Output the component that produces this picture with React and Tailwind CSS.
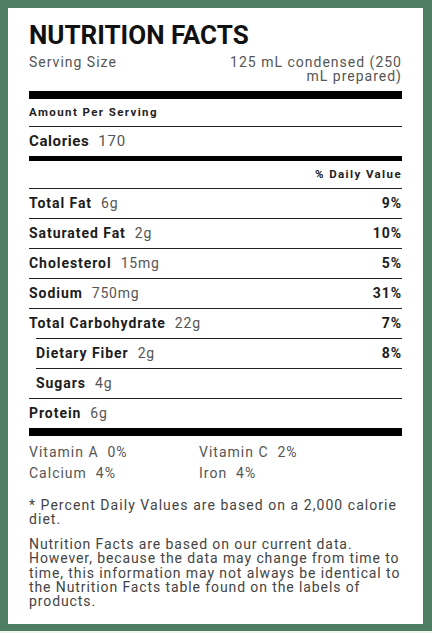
import React from 'react';

const nutrients = [
  { label: 'Total Fat', value: '6g', dv: '9%' },
  { label: 'Saturated Fat', value: '2g', dv: '10%' },
  { label: 'Cholesterol', value: '15mg', dv: '5%' },
  { label: 'Sodium', value: '750mg', dv: '31%' },
  { label: 'Total Carbohydrate', value: '22g', dv: '7%' },
  { label: 'Dietary Fiber', value: '2g', dv: '8%', sub: true },
  { label: 'Sugars', value: '4g', dv: '', sub: true },
  { label: 'Protein', value: '6g', dv: '' },
];

function Row({ label, value, dv, sub }) {
  return (
    <div className={`flex items-center justify-between h-[30px] border-t border-[#222] ${sub ? 'ml-[7px]' : ''}`}>
      <div className="flex items-baseline gap-[9px]">
        <span className="font-bold text-[14px] tracking-[0.95px] text-[#1c1c1c]">{label}</span>
        <span className="text-[14px] tracking-[0.8px] text-[#555]">{value}</span>
      </div>
      <span className="font-bold text-[14px] tracking-[0.95px] text-[#1c1c1c]">{dv}</span>
    </div>
  );
}

export default function App() {
  return (
    <div className="w-[432px] h-[633px] bg-[#eef5f0]" style={{ fontFamily: 'Roboto, "Liberation Sans", sans-serif' }}>
      <div className="h-[631px] bg-[#4e7d63] pt-[8px] pl-[8px] pr-[9px] pb-[7px]">
        <div className="h-full bg-white px-[21px] pt-[12px]">
          <h1 className="font-bold text-[26px] leading-[30px] text-[#111]">NUTRITION FACTS</h1>

          <div className="flex justify-between mt-[5px] text-[14px] leading-[14px] text-[#555] tracking-[1px]">
            <span>Serving Size</span>
            <span className="text-right w-[178px]">125 mL condensed (250 mL prepared)</span>
          </div>

          <div className="h-[8px] bg-black mt-[8px]" />

          <div className="h-[27px] flex items-center text-[11.5px] font-bold tracking-[1.4px] text-[#222]">
            Amount Per Serving
          </div>

          <div className="flex gap-[9px] h-[30px] items-center border-t border-[#222]">
            <span className="font-bold text-[15px] tracking-[0.6px] text-[#1c1c1c]">Calories</span>
            <span className="text-[15px] tracking-[0.8px] text-[#555]">170</span>
          </div>

          <div className="h-[5px] bg-black" />

          <div className="h-[27px] flex items-center justify-end text-[11.5px] font-bold tracking-[1.4px] text-[#222]">
            % Daily Value
          </div>

          {nutrients.map((n) => (
            <Row key={n.label} {...n} />
          ))}

          <div className="h-[8px] bg-black" />

          <div className="grid grid-cols-[170px_1fr] text-[14px] leading-[21px] text-[#555] tracking-[1px] mt-[6px]">
            <span>Vitamin A&nbsp; 0%</span>
            <span>Vitamin C&nbsp; 2%</span>
            <span>Calcium&nbsp; 4%</span>
            <span>Iron&nbsp; 4%</span>
          </div>

          <p className="mt-[14px] text-[14px] leading-[14px] text-[#444] tracking-[1.05px]">
            * Percent Daily Values are based on a 2,000 calorie diet.
          </p>

          <p className="mt-[11px] mr-[-6px] text-[14px] leading-[14.3px] text-[#444] tracking-[0.9px]">
            Nutrition Facts are based on our current data. However, because the data may change from time to time, this information may not always be identical to the Nutrition Facts table found on the labels of products.
          </p>
        </div>
      </div>
    </div>
  );
}
